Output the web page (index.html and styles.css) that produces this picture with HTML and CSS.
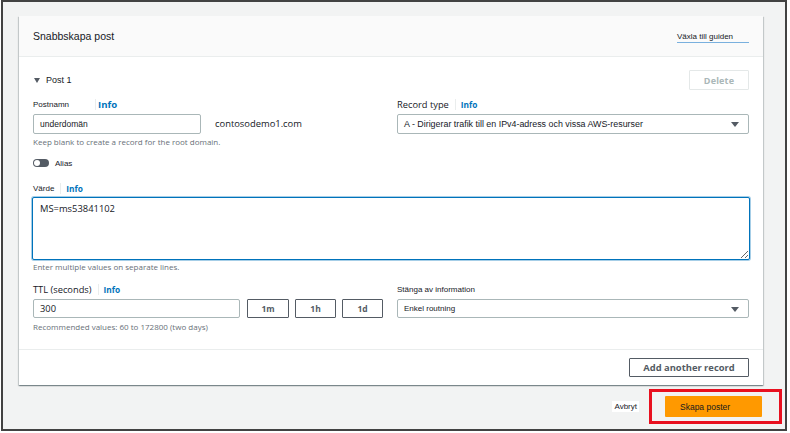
FILE: index.html
```html
<!DOCTYPE html>
<html lang="sv">
<head>
<meta charset="utf-8">
<title>Snabbskapa post</title>
<link rel="stylesheet" href="styles.css">
</head>
<body>
<div class="frame">
  <div class="card">
    <div class="card-header">
      <h2 class="title sw">Snabbskapa post</h2>
      <a class="wizard sw">Växla till guiden</a>
    </div>
    <div class="card-body">
      <div class="post-row">
        <div class="post-title"><span class="caret"></span><span class="sw">Post 1</span></div>
        <button class="btn btn-disabled">Delete</button>
      </div>

      <div class="grid first">
        <div class="field">
          <div class="label-row"><span class="label sw w-postnamn">Postnamn</span><span class="sep"></span><span class="info info-lg">Info</span></div>
          <div class="name-row">
            <div class="input name-input sw">underdomän</div>
            <span class="domain">contosodemo1.com</span>
          </div>
          <div class="hint">Keep blank to create a record for the root domain.</div>
        </div>
        <div class="field">
          <div class="label-row"><span class="label aws">Record type</span><span class="sep"></span><span class="info">Info</span></div>
          <div class="select sw">A - Dirigerar trafik till en IPv4-adress och vissa AWS-resurser<span class="arrow"></span></div>
        </div>
      </div>

      <div class="toggle-row">
        <span class="toggle"><span class="knob"></span></span>
        <span class="sw small">Alias</span>
      </div>

      <div class="value-field">
        <div class="label-row"><span class="label sw">Värde</span><span class="sep"></span><span class="info">Info</span></div>
        <textarea class="textarea" readonly>MS=ms53841102</textarea>
        <div class="hint">Enter multiple values on separate lines.</div>
      </div>

      <div class="grid ttl">
        <div class="field">
          <div class="label-row"><span class="label aws">TTL (seconds)</span><span class="sep"></span><span class="info">Info</span></div>
          <div class="ttl-row">
            <div class="input ttl-input aws-val">300</div>
            <button class="btn btn-unit">1m</button>
            <button class="btn btn-unit">1h</button>
            <button class="btn btn-unit">1d</button>
          </div>
          <div class="hint">Recommended values: 60 to 172800 (two days)</div>
        </div>
        <div class="field">
          <div class="label-row"><span class="label sw">Stänga av information</span></div>
          <div class="select short sw">Enkel routning<span class="arrow"></span></div>
        </div>
      </div>
    </div>
    <div class="card-footer">
      <button class="btn btn-normal">Add another record</button>
    </div>
  </div>

  <div class="actions">
    <span class="cancel sw">Avbryt</span>
    <div class="highlight">
      <button class="primary sw">Skapa poster</button>
    </div>
  </div>
</div>
</body>
</html>
```

FILE: styles.css
```css
* { box-sizing: border-box; }

html, body {
  margin: 0;
  padding: 0;
  background: #ffffff;
}

body {
  font-family: "Open Sans", "Liberation Sans", sans-serif;
  color: #16191f;
}

.sw { font-family: "Liberation Sans", Arial, sans-serif; }

.frame {
  margin-left: 1px;
  width: 786px;
  height: 431px;
  border: 2px solid #424242;
  background: #f2f3f3;
  padding: 14px 0 0 16px;
}

.card {
  width: 744px;
  background: #ffffff;
  box-shadow: 0 1px 1px 0 rgba(0, 28, 36, 0.3), 1px 1px 1px 0 rgba(0, 28, 36, 0.15), -1px 1px 1px 0 rgba(0, 28, 36, 0.15);
}

.card-header {
  height: 41px;
  background: #fafafa;
  border-bottom: 1px solid #eaeded;
  display: flex;
  align-items: center;
  justify-content: space-between;
  padding: 0 14px;
}

.title {
  margin: 0;
  font-size: 10.5px;
  font-weight: normal;
  color: #16191f;
}

.wizard {
  font-size: 8px;
  color: #16191f;
  border-bottom: 1px solid #79b0de;
  width: 72px;
  line-height: 11px;
  margin-top: 2px;
}

.card-body {
  padding: 13px 14px 0 14px;
}

.post-row {
  display: flex;
  align-items: center;
  justify-content: space-between;
  height: 20px;
}

.post-title {
  display: flex;
  align-items: center;
  font-size: 9px;
  padding-left: 1px;
}

.caret {
  width: 0;
  height: 0;
  border-left: 3.5px solid transparent;
  border-right: 3.5px solid transparent;
  border-top: 5px solid #545b64;
  margin-right: 6px;
}

.btn {
  font-family: "Open Sans", sans-serif;
  font-weight: 700;
  background: #ffffff;
  padding: 0;
  border-radius: 1px;
  cursor: pointer;
}

.btn-disabled {
  width: 60px;
  height: 20px;
  border: 1px solid #e4e8e8;
  color: #aab7b8;
  font-size: 9px;
  letter-spacing: 0.2px;
}

.grid {
  display: grid;
  grid-template-columns: 351px 352px;
  column-gap: 13px;
  align-items: start;
}

.grid.first { margin-top: 9px; }

.label-row {
  display: flex;
  align-items: center;
  height: 10px;
}

.label {
  font-size: 8px;
  color: #16191f;
}

.label.aws {
  font-size: 9.3px;
  color: #16191f;
}

.label.w-postnamn { width: 62px; }

.sep {
  width: 1px;
  height: 11px;
  background: #eaeded;
  margin: 0 5px 0 6px;
}

.info {
  font-size: 8.3px;
  font-weight: 700;
  color: #0073bb;
}

.info-lg {
  font-size: 9.6px;
  margin-left: 1px;
}

.w-postnamn + .sep { margin: 0 1px 0 0; }

.name-row {
  display: flex;
  align-items: center;
  margin-top: 5px;
}

.input {
  height: 20px;
  border: 1px solid #aab7b8;
  border-radius: 2px;
  display: flex;
  align-items: center;
  padding-left: 6px;
  font-size: 8.5px;
  background: #ffffff;
}

.name-input { width: 168px; }

.domain {
  margin-left: 14px;
  font-size: 9.4px;
  color: #16191f;
  margin-top: -2px;
}

.hint {
  margin-top: 3px;
  font-size: 8px;
  line-height: 9px;
  color: #687078;
}

.select {
  position: relative;
  margin-top: 5px;
  height: 20px;
  border: 1px solid #aab7b8;
  border-radius: 2px;
  display: flex;
  align-items: center;
  padding-left: 6px;
  font-size: 8.9px;
  width: 352px;
}

.select.short {
  height: 19px;
  font-size: 8px;
}

.arrow {
  position: absolute;
  right: 9px;
  top: 50%;
  margin-top: -2px;
  width: 0;
  height: 0;
  border-left: 4px solid transparent;
  border-right: 4px solid transparent;
  border-top: 5px solid #545b64;
}

.toggle-row {
  margin-top: 12px;
  height: 10px;
  display: flex;
  align-items: center;
}

.toggle {
  width: 16px;
  height: 8px;
  border-radius: 4px;
  background: #545b64;
  display: flex;
  align-items: center;
  padding-left: 1px;
}

.knob {
  width: 6px;
  height: 6px;
  border-radius: 50%;
  background: #ffffff;
}

.small {
  font-size: 8px;
  margin-left: 6px;
}

.value-field { margin-top: 15px; }

.textarea {
  display: block;
  margin: 4px 0 0 -1px;
  width: 718px;
  height: 63px;
  border: 1px solid #0073bb;
  box-shadow: 0 0 0 1px rgba(0, 115, 187, 0.35);
  border-radius: 2px;
  padding: 4px 7px;
  font-family: "Open Sans", sans-serif;
  font-size: 9.4px;
  line-height: 13px;
  color: #16191f;
  outline: none;
  resize: vertical;
}

.textarea + .hint { margin-top: 2px; }

.grid.ttl { margin-top: 13px; }

.ttl-row {
  display: flex;
  align-items: center;
  margin-top: 5px;
}

.ttl-input {
  width: 207px;
  height: 19px;
}

.aws-val {
  font-family: "Open Sans", sans-serif;
  font-size: 9.3px;
}

.btn-unit {
  height: 19px;
  width: 42px;
  border: 1px solid #545b64;
  color: #545b64;
  font-size: 8.5px;
  margin-left: 7px;
}

.btn-unit + .btn-unit { width: 41px; margin-left: 6px; }

.grid.ttl .hint { margin-top: 4px; }

.card-footer {
  margin-top: 18px;
  border-top: 1px solid #eaeded;
  padding: 8px 14px 8px 0;
  display: flex;
  justify-content: flex-end;
}

.btn-normal {
  height: 19px;
  width: 120px;
  border: 1px solid #545b64;
  color: #545b64;
  font-size: 9.4px;
}

.actions {
  margin-top: 4px;
  width: 763px;
  display: flex;
  justify-content: flex-end;
  align-items: center;
}

.cancel {
  font-size: 8px;
  background: #ffffff;
  padding: 1px 2px;
  margin-right: 10px;
  color: #16191f;
}

.highlight {
  width: 133px;
  height: 35px;
  border: 3px solid #e8101f;
  padding: 4px 0 0 13px;
}

.primary {
  display: block;
  width: 97px;
  height: 21px;
  border: none;
  border-radius: 1px;
  background: #ff9900;
  color: #16191f;
  font-size: 8.5px;
  text-align: left;
  padding: 0 0 0 15px;
}
```
